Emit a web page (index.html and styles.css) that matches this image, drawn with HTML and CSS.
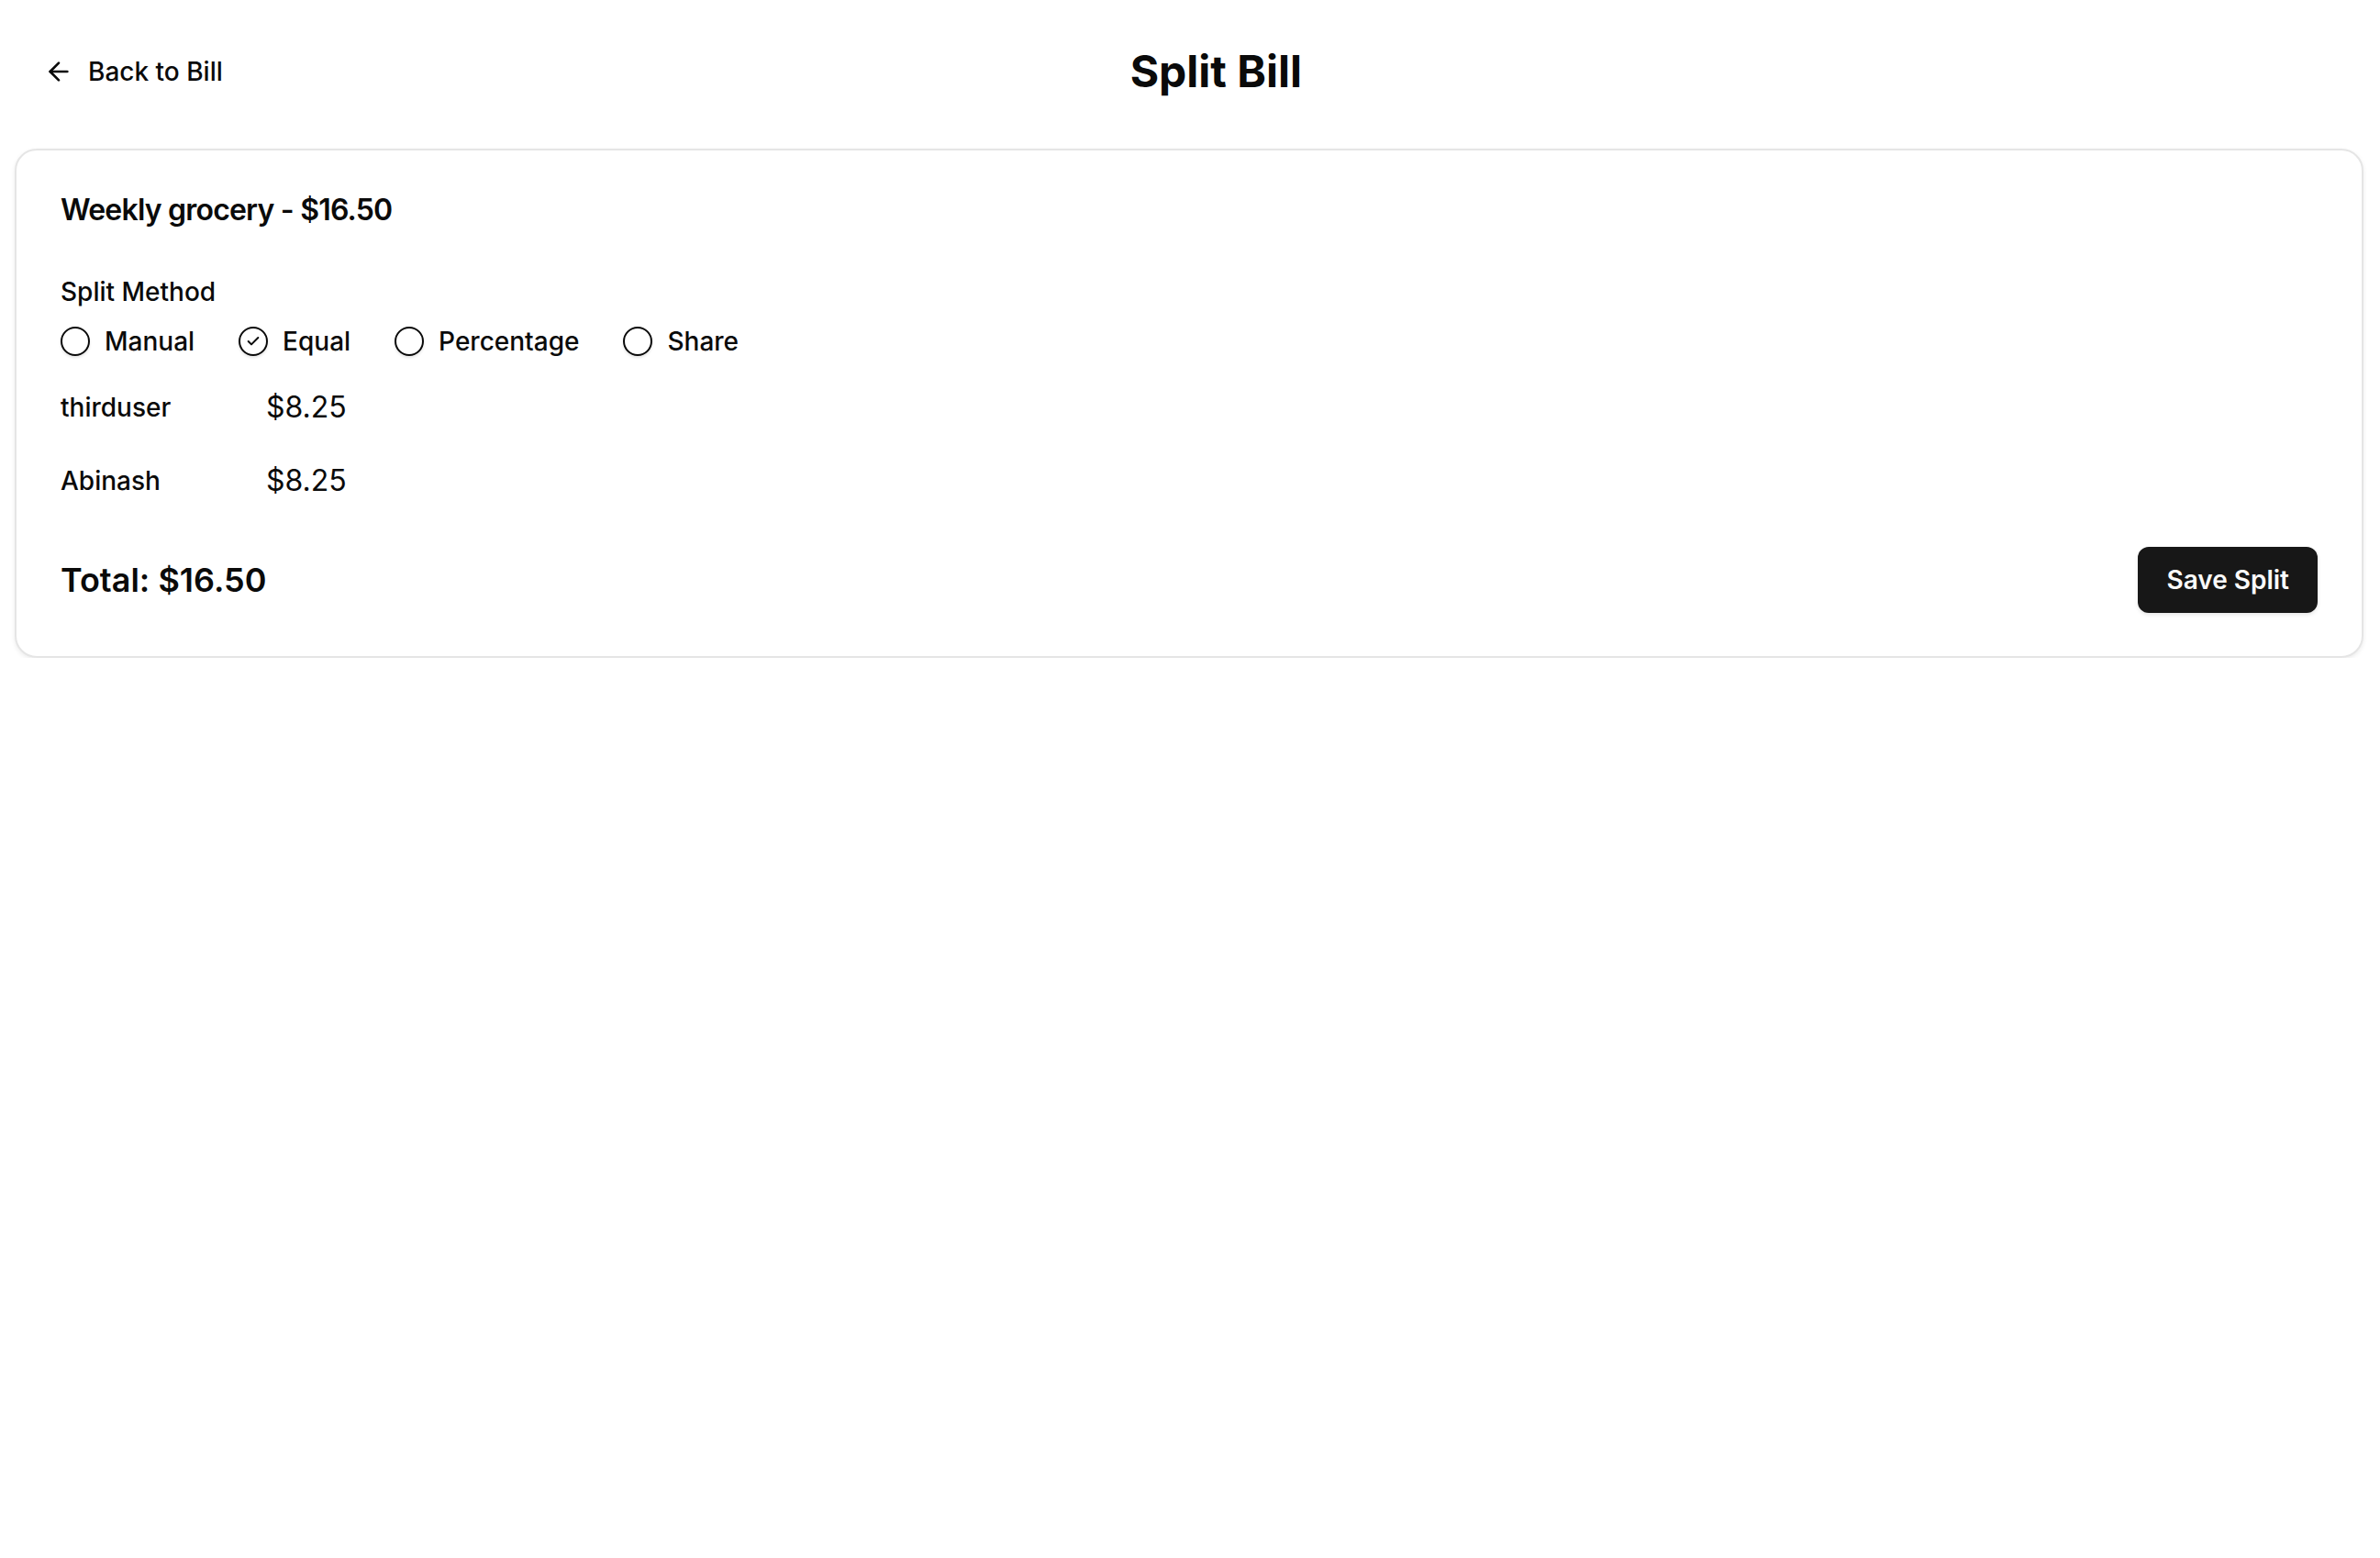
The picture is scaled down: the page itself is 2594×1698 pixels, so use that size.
FILE: index.html
```html
<!DOCTYPE html>
<html lang="en">
<head>
    <meta charset="UTF-8">
    <meta name="viewport" content="width=device-width, initial-scale=1.0">
    <title>Split Bill</title>
    <link rel="stylesheet" href="styles.css">
</head>
<body>
    <div class="page">
        <header class="page-header">
            <a class="back-link" href="#">
                <svg class="icon" viewBox="0 0 24 24" fill="none" stroke="currentColor" stroke-width="2" stroke-linecap="round" stroke-linejoin="round">
                    <path d="m12 19-7-7 7-7"/>
                    <path d="M19 12H5"/>
                </svg>
                Back to Bill
            </a>
            <h1 class="page-title">Split Bill</h1>
        </header>

        <!-- Split card -->
        <div class="card">
            <h2 class="bill-title">Weekly grocery - $16.50</h2>

            <div class="field-label">Split Method</div>
            <div class="method-options">
                <label class="method">
                    <span class="radio"></span>
                    Manual
                </label>
                <label class="method">
                    <span class="radio checked">
                        <svg viewBox="0 0 24 24" fill="none" stroke="currentColor" stroke-width="3" stroke-linecap="round" stroke-linejoin="round">
                            <path d="M20 6 9 17l-5-5"/>
                        </svg>
                    </span>
                    Equal
                </label>
                <label class="method">
                    <span class="radio"></span>
                    Percentage
                </label>
                <label class="method">
                    <span class="radio"></span>
                    Share
                </label>
            </div>

            <div class="split-list">
                <div class="split-row">
                    <span class="member">thirduser</span>
                    <span class="amount">$8.25</span>
                </div>
                <div class="split-row">
                    <span class="member">Abinash</span>
                    <span class="amount">$8.25</span>
                </div>
            </div>

            <div class="card-footer">
                <div class="total">Total: $16.50</div>
                <button class="save-btn" type="button">Save Split</button>
            </div>
        </div>
    </div>
</body>
</html>
```

FILE: styles.css
```css
/* General Reset */
* {
    margin: 0;
    padding: 0;
    box-sizing: border-box;
}
body {
    font-family: 'Inter', 'Noto Sans', sans-serif;
    color: #0a0a0a;
    background: #fff;
}
.page {
    padding: 0 18px 0 16px;
}
.page-header {
    display: flex;
    align-items: center;
    height: 80px;
    margin-top: 38px;
    margin-bottom: 44px;
}
.back-link {
    display: flex;
    align-items: center;
    gap: 16px;
    padding: 0 32px;
    height: 80px;
    font-size: 28px;
    line-height: 1;
    font-weight: 500;
    color: #0a0a0a;
    text-decoration: none;
}
.icon {
    width: 32px;
    height: 32px;
}
.page-title {
    flex: 1;
    margin-right: 200px;
    text-align: center;
    font-size: 48px;
    line-height: 1;
    font-weight: 700;
}
.card {
    border: 2px solid #e5e5e5;
    border-radius: 24px;
    padding: 49px 48px 47px;
    background: #fff;
    box-shadow: 0 2px 5px rgba(0, 0, 0, 0.08);
}
.bill-title {
    font-size: 32px;
    line-height: 1;
    font-weight: 600;
    letter-spacing: -0.8px;
    margin-bottom: 59px;
}
.field-label {
    font-size: 28px;
    line-height: 1;
    font-weight: 500;
    margin-bottom: 24px;
}
.method-options {
    display: flex;
    align-items: center;
    gap: 48px;
    height: 32px;
    margin-bottom: 16px;
}
.method {
    display: flex;
    align-items: center;
    gap: 16px;
    font-size: 28px;
    line-height: 1;
    font-weight: 500;
}
.radio {
    display: flex;
    align-items: center;
    justify-content: center;
    width: 32px;
    height: 32px;
    border: 2px solid #0a0a0a;
    border-radius: 50%;
    box-shadow: 0 2px 3px rgba(0, 0, 0, 0.1);
}
.radio svg {
    width: 16px;
    height: 16px;
}
.split-row {
    display: flex;
    align-items: center;
    height: 80px;
}
.member {
    width: 224px;
    font-size: 28px;
    line-height: 1;
    font-weight: 500;
}
.amount {
    font-size: 32px;
    line-height: 1;
}
.card-footer {
    display: flex;
    align-items: center;
    justify-content: space-between;
    margin-top: 32px;
}
.total {
    font-size: 36px;
    line-height: 1;
    font-weight: 600;
}
.save-btn {
    height: 72px;
    padding: 0 31px;
    font-family: inherit;
    font-size: 28px;
    font-weight: 600;
    color: #fafafa;
    background: #171717;
    border: none;
    border-radius: 12px;
    box-shadow: 0 2px 4px rgba(0, 0, 0, 0.1);
    cursor: pointer;
}
```
